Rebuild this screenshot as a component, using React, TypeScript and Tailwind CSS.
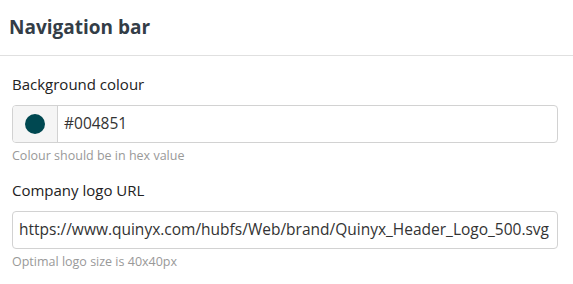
export default function App() {
  return (
    <div className="w-[573px] h-[284px] bg-white font-['Open_Sans',sans-serif] overflow-hidden">
      {/* Header */}
      <div className="h-[56px] border-b border-[#e0e0e0] flex items-center px-[9px]">
        <h1 className="text-[19px] font-bold text-[#333d47]">Navigation bar</h1>
      </div>

      <div className="pl-[12px] pr-[15px] pt-[18px]">
        <Field label="Background colour" hint="Colour should be in hex value">
          <div className="flex h-[38px] border border-[#d2d2d2] rounded-[4px] overflow-hidden">
            <div className="w-[45px] bg-[#f5f5f5] border-r border-[#d2d2d2] flex items-center justify-center">
              <span className="w-[20px] h-[20px] rounded-full bg-[#004851]"></span>
            </div>
            <div className="flex items-center pl-[6px] text-[15.5px] text-[#333]">#004851</div>
          </div>
        </Field>

        <div className="h-[16px]" />

        <Field label="Company logo URL" hint="Optimal logo size is 40x40px">
          <div className="flex items-center h-[38px] border border-[#d2d2d2] rounded-[4px] pl-[6px] text-[15.5px] text-[#333] whitespace-nowrap overflow-hidden">
            https://www.quinyx.com/hubfs/Web/brand/Quinyx_Header_Logo_500.svg
          </div>
        </Field>
      </div>
    </div>
  );
}

function Field({ label, hint, children }: { label: string; hint: string; children: React.ReactNode }) {
  return (
    <div>
      <p className="text-[15px] leading-[20px] text-[#222] mb-[11px]">{label}</p>
      {children}
      <p className="text-[12.5px] leading-[16px] text-[#999] mt-[5px]">{hint}</p>
    </div>
  );
}
